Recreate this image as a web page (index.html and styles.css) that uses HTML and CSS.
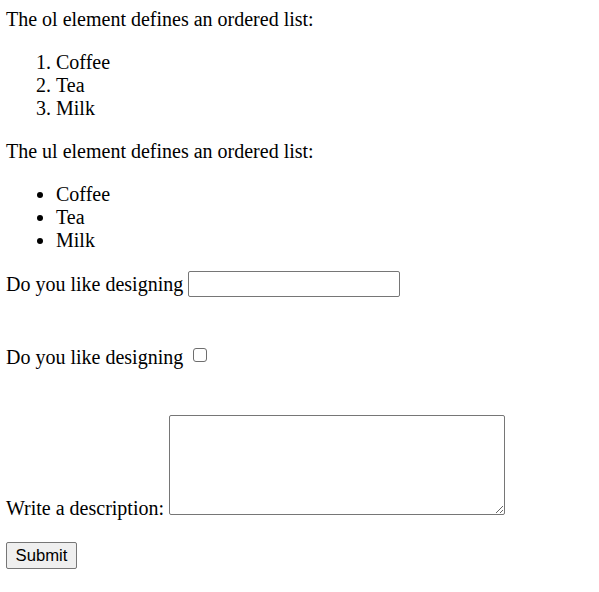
FILE: index.html
```html
<!DOCTYPE html>
<html>
<head>
<meta charset="utf-8">
<link rel="stylesheet" href="styles.css">
</head>
<body>
<div class="page">
  <p class="text">The ol element defines an ordered list:</p>
  <ol class="list">
    <li>Coffee</li>
    <li>Tea</li>
    <li>Milk</li>
  </ol>
  <p class="text">The ul element defines an ordered list:</p>
  <ul class="list bullets">
    <li>Coffee</li>
    <li>Tea</li>
    <li>Milk</li>
  </ul>
  <form class="form" onsubmit="return false">
    <div class="row row-input">
      <label class="label" for="design">Do you like designing</label>
      <input class="field" id="design" type="text">
    </div>
    <div class="row row-check">
      <label class="label" for="likes">Do you like designing</label>
      <input class="check" id="likes" type="checkbox">
    </div>
    <div class="row row-area">
      <label class="label label-area" for="desc">Write a description:</label>
      <textarea class="area" id="desc"></textarea>
    </div>
    <button class="submit" type="submit">Submit</button>
  </form>
</div>
</body>
</html>
```
FILE: styles.css
```css
html, body {
  margin: 0;
  padding: 0;
  background: #ffffff;
}

.page {
  padding: 8px 0 0 6px;
  font-family: "Liberation Serif", "Times New Roman", serif;
  font-size: 20px;
  line-height: 23px;
  color: #000000;
}

.text {
  margin: 0 0 20px 0;
}

.list {
  margin: 0 0 20px 0;
  padding-left: 50px;
}

.bullets {
  margin-bottom: 19px;
}

.form {
  margin: 0;
}

.row {
  display: flex;
  align-items: center;
  gap: 5px;
}

.row-input {
  height: 26px;
}

.row-check {
  margin-top: 49px;
  height: 23px;
  gap: 10px;
}

.row-area {
  margin-top: 46px;
  align-items: flex-end;
  gap: 5px;
}

.label {
  white-space: nowrap;
}

.label-area {
  margin-bottom: -5px;
}

.field {
  box-sizing: border-box;
  width: 212px;
  height: 26px;
  margin: 0;
  padding: 1px 3px;
  border: 1px solid #767676;
  border-radius: 2px;
  font-family: "Liberation Sans", Arial, sans-serif;
  font-size: 16.67px;
  background: #ffffff;
}

.check {
  box-sizing: border-box;
  appearance: none;
  -webkit-appearance: none;
  width: 14px;
  height: 14px;
  margin: -5px 0 0 0;
  border: 1px solid #6e6e6e;
  border-radius: 3px;
  background: #ffffff;
}

.area {
  box-sizing: border-box;
  width: 336px;
  height: 100px;
  margin: 0;
  padding: 2px;
  border: 1px solid #767676;
  border-radius: 2px;
  font-family: "Liberation Mono", monospace;
  font-size: 16px;
  background: #ffffff;
}

.submit {
  box-sizing: border-box;
  display: block;
  margin-top: 27px;
  width: 71px;
  height: 27px;
  padding: 0 7px;
  border: 1px solid #767676;
  border-radius: 2px;
  background: #efefef;
  font-family: "Liberation Sans", Arial, sans-serif;
  font-size: 16.67px;
  color: #000000;
}
```
